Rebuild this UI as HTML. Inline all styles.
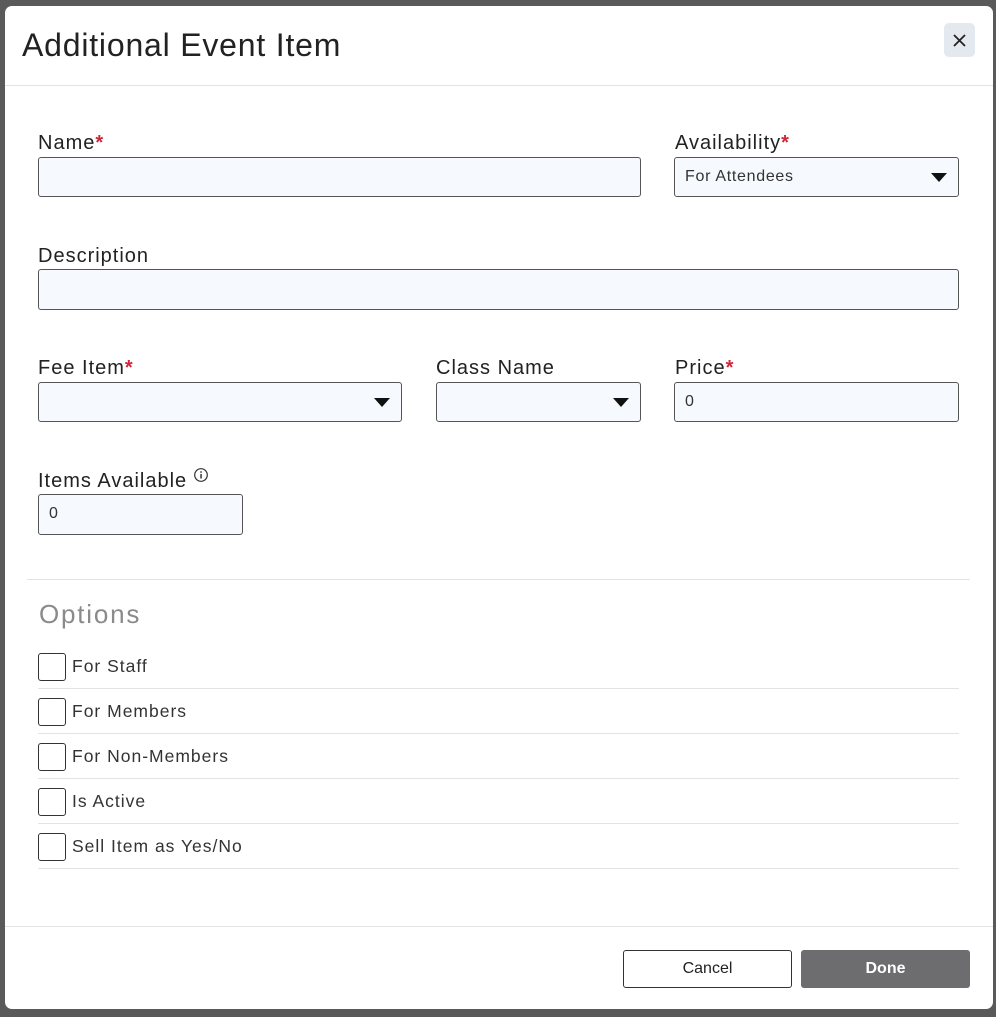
<!DOCTYPE html>
<html><head><style>
body{margin:0;width:996px;height:1017px;background:#5a5a5a;position:relative;overflow:hidden;font-family:"Liberation Sans",sans-serif;}
.m{position:absolute;left:5px;top:6px;width:988px;height:1003px;background:#fff;border-radius:7px;}
.a{position:absolute;}
.t{left:22px;top:27px;font-size:32px;color:#222;letter-spacing:0.8px;}
.x{left:944px;top:23px;width:31px;height:34px;background:#e4e8ef;border-radius:5px;}
.hl{height:1px;background:#e3e3e3;}
.l{font-size:20px;color:#222;letter-spacing:1px;}
.l b{color:#d0243a;font-weight:bold;}
.i{background:#f6f9fd;border:1px solid #555;border-radius:3px;box-sizing:border-box;font-size:16px;color:#333;padding-left:10px;line-height:38px;letter-spacing:0.7px;}
.car{position:absolute;right:11px;top:15px;width:0;height:0;border-left:8px solid transparent;border-right:8px solid transparent;border-top:9px solid #111;}
.cb{width:28px;height:28px;border:1px solid #333;border-radius:3px;box-sizing:border-box;}
.ct{font-size:17.5px;color:#333;letter-spacing:1px;}
.btn{box-sizing:border-box;height:38px;border-radius:3px;text-align:center;line-height:36px;font-size:16px;}
</style></head><body>
<div class="m"></div>
<div class="a t">Additional Event Item</div>
<div class="a x"><svg width="31" height="34"><path d="M10 12L21 23M21 12L10 23" stroke="#222" stroke-width="1.8"/></svg></div>
<div class="a hl" style="left:5px;top:85px;width:988px"></div>

<div class="a l" style="left:38px;top:132px">Name<b>*</b></div>
<div class="a i" style="left:38px;top:157px;width:603px;height:40px"></div>
<div class="a l" style="left:675px;top:132px">Availability<b>*</b></div>
<div class="a i" style="left:674px;top:157px;width:285px;height:40px">For Attendees<div class="car"></div></div>

<div class="a l" style="left:38px;top:245px">Description</div>
<div class="a i" style="left:38px;top:269px;width:921px;height:41px"></div>

<div class="a l" style="left:38px;top:357px">Fee Item<b>*</b></div>
<div class="a i" style="left:38px;top:382px;width:364px;height:40px"><div class="car"></div></div>
<div class="a l" style="left:436px;top:357px">Class Name</div>
<div class="a i" style="left:436px;top:382px;width:205px;height:40px"><div class="car"></div></div>
<div class="a l" style="left:675px;top:357px">Price<b>*</b></div>
<div class="a i" style="left:674px;top:382px;width:285px;height:40px">0</div>

<div class="a l" style="left:38px;top:470px">Items Available</div>
<svg class="a" style="left:193px;top:467px" width="16" height="16"><circle cx="8" cy="8" r="6.3" fill="none" stroke="#333" stroke-width="1.2"/><rect x="7.3" y="7" width="1.5" height="4.5" fill="#333"/><rect x="7.3" y="4.3" width="1.5" height="1.5" fill="#333"/></svg>
<div class="a i" style="left:38px;top:494px;width:205px;height:41px">0</div>

<div class="a hl" style="left:27px;top:579px;width:943px"></div>
<div class="a" style="left:39px;top:599px;font-size:26px;color:#8a8a8a;letter-spacing:1.8px">Options</div>

<div class="a cb" style="left:38px;top:653px"></div><div class="a ct" style="left:72px;top:656px">For Staff</div>
<div class="a hl" style="left:38px;top:688px;width:921px"></div>
<div class="a cb" style="left:38px;top:698px"></div><div class="a ct" style="left:72px;top:701px">For Members</div>
<div class="a hl" style="left:38px;top:733px;width:921px"></div>
<div class="a cb" style="left:38px;top:743px"></div><div class="a ct" style="left:72px;top:746px">For Non-Members</div>
<div class="a hl" style="left:38px;top:778px;width:921px"></div>
<div class="a cb" style="left:38px;top:788px"></div><div class="a ct" style="left:72px;top:791px">Is Active</div>
<div class="a hl" style="left:38px;top:823px;width:921px"></div>
<div class="a cb" style="left:38px;top:833px"></div><div class="a ct" style="left:72px;top:836px">Sell Item as Yes/No</div>
<div class="a hl" style="left:38px;top:868px;width:921px"></div>

<div class="a hl" style="left:5px;top:926px;width:988px"></div>
<div class="a btn" style="left:623px;top:950px;width:169px;border:1px solid #333;color:#222;background:#fff">Cancel</div>
<div class="a btn" style="left:801px;top:950px;width:169px;background:#6d6d70;color:#fff;font-weight:bold;line-height:38px">Done</div>
</body></html>
